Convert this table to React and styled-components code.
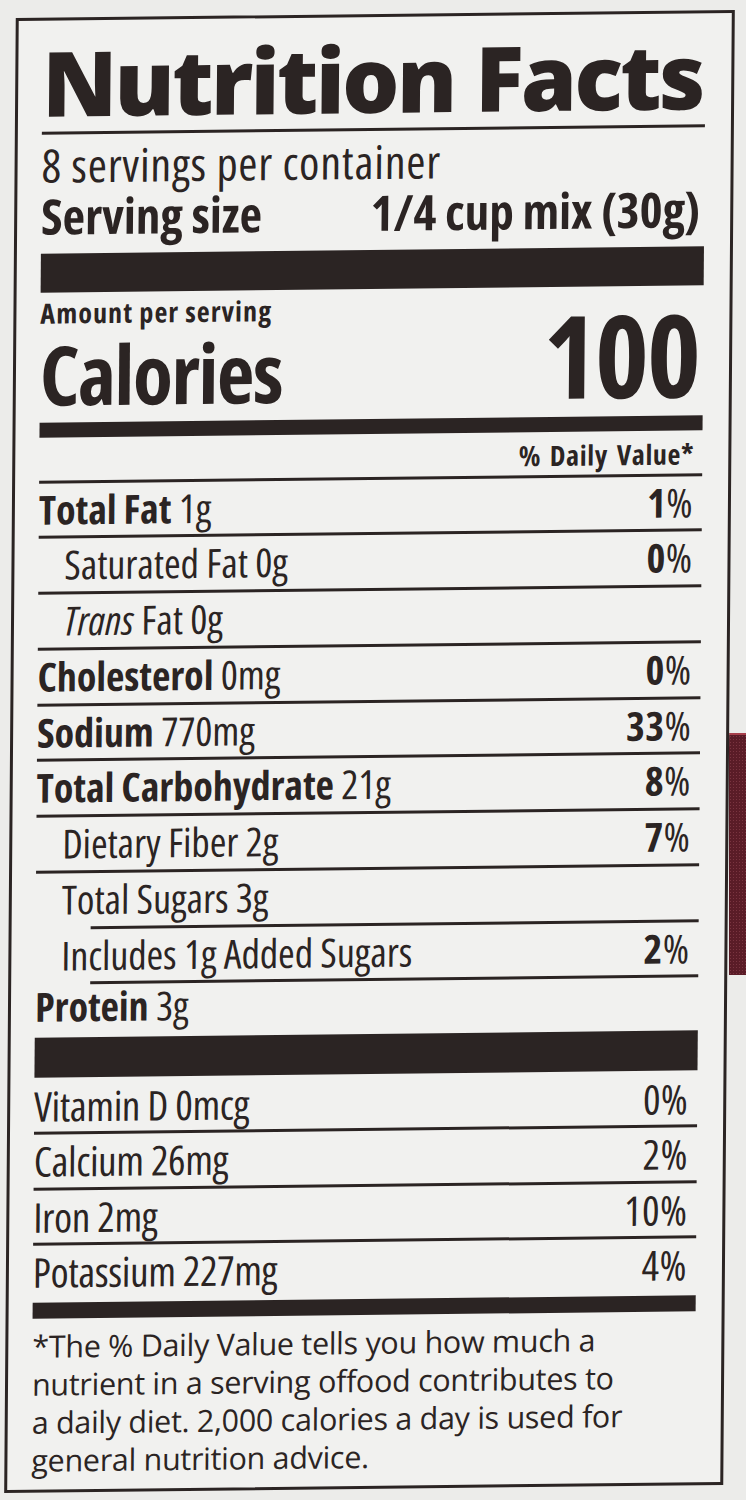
import styled, { createGlobalStyle } from 'styled-components';

const ink = '#2b2423';

const GlobalStyle = createGlobalStyle`
  body {
    margin: 0;
    background: #ececea;
    color: ${ink};
    font-family: "Open Sans", "Liberation Sans", sans-serif;
  }
`;

const Page = styled.div`
  display: flex;
  align-items: flex-start;
  width: 746px;
  height: 1500px;
  overflow: hidden;
`;

// the photo is shot a little out of square, hence the small skew
const Label = styled.section`
  box-sizing: border-box;
  flex: none;
  display: flex;
  flex-direction: column;
  margin: 14px 0 0 10px;
  width: 719px;
  height: 1475px;
  padding: 16px 26px 0 24px;
  border: 3px solid ${ink};
  background: #f1f1ef;
  transform: skewX(-0.45deg) skewY(-0.65deg);
`;

const Side = styled.div`
  flex: none;
  width: 17px;
`;

const Wrapper = styled.div`
  margin-top: 733px;
  height: 240px;
  border-top: 2px solid #a8404c;
  background-color: #5a1c27;
  background-image: radial-gradient(#7a3440 0.8px, transparent 1px);
  background-size: 3px 3px;
`;

const Title = styled.h1`
  margin: 0;
  font-size: 90px;
  line-height: 91px;
  font-weight: 800;
  font-stretch: 100%;
  letter-spacing: -2.7px;
  white-space: nowrap;
`;

const Rule = styled.div`
  height: ${(p) => p.$h || 3}px;
  margin-top: ${(p) => p.$top || 0}px;
  background: ${ink};
`;

const Line = styled.div`
  display: flex;
  justify-content: space-between;
  align-items: baseline;
  margin-top: ${(p) => p.$top || 0}px;
  font-size: ${(p) => p.$size}px;
  line-height: ${(p) => p.$lh || p.$size}px;
  font-weight: ${(p) => (p.$bold ? 700 : 400)};
  font-stretch: 75%;
  letter-spacing: ${(p) => p.$ls || 0}px;
  white-space: nowrap;
  padding-right: ${(p) => p.$pr || 0}px;
`;

const CalBlock = styled.div`
  display: flex;
  justify-content: space-between;
  align-items: flex-end;
  margin-top: 7px;
  padding-right: 4px;
`;

const CalLeft = styled.div`
  display: flex;
  flex-direction: column;
`;

const Amount = styled.div`
  font-size: 28px;
  line-height: 27px;
  font-weight: 700;
  font-stretch: 75%;
  letter-spacing: 1.1px;
`;

const Calories = styled.div`
  margin-top: 5px;
  font-size: 82px;
  line-height: 84px;
  font-weight: 700;
  font-stretch: 75%;
  letter-spacing: -1.5px;
`;

const Big = styled.div`
  font-size: 115px;
  line-height: 110px;
  font-weight: 700;
  font-stretch: 75%;
  letter-spacing: -2px;
`;

const DailyHead = styled.div`
  margin-top: 10.5px;
  padding-right: 8px;
  text-align: right;
  font-size: 28px;
  line-height: 27px;
  font-weight: 700;
  font-stretch: 75%;
  letter-spacing: 0.7px;
  word-spacing: 3px;
`;

const Row = styled.div`
  display: flex;
  justify-content: space-between;
  padding-left: ${(p) => (p.$sub ? 26 : 0)}px;
  padding-right: 9px;
  font-size: ${(p) => p.$size || 40}px;
  line-height: ${(p) => p.$lh || 52.75}px;
  font-stretch: 75%;
  letter-spacing: ${(p) => p.$ls || 0}px;
  white-space: nowrap;
  padding-bottom: ${(p) => (p.$rule === false ? 0 : 3)}px;
  background: ${(p) =>
    p.$rule === false
      ? 'none'
      : `linear-gradient(${ink}, ${ink}) no-repeat right bottom / calc(100% - ${p.$inset || 0}px) 3px`};
`;

const Name = styled.span`
  font-weight: 700;
`;

const Ital = styled.i`
  font-style: italic;
`;

const Pct = styled.span`
  font-weight: ${(p) => (p.$bold ? 700 : 400)};
  letter-spacing: 0.5px;
`;

const Sign = styled.span`
  font-weight: 400;
`;

const Vitamins = styled.div`
  padding-top: 2px;
`;

const Footnote = styled.p`
  margin: 8px 0 0;
  font-size: 30.5px;
  line-height: 38px;
  font-stretch: 100%;
  letter-spacing: -0.3px;
  white-space: nowrap;
`;

const nutrients = [
  { name: 'Total Fat', amount: '1g', pct: '1' },
  { sub: true, label: 'Saturated Fat 0g', pct: '0' },
  { sub: true, trans: true },
  { name: 'Cholesterol', amount: '0mg', pct: '0' },
  { name: 'Sodium', amount: '770mg', pct: '33' },
  { name: 'Total Carbohydrate', amount: '21g', pct: '8' },
  { sub: true, label: 'Dietary Fiber 2g', pct: '7' },
  { sub: true, label: 'Total Sugars 3g', inset: 55 },
  { sub: true, label: 'Includes 1g Added Sugars', pct: '2', inset: 55 },
];

const vitamins = [
  ['Vitamin D 0mcg', '0%'],
  ['Calcium 26mg', '2%'],
  ['Iron 2mg', '10%'],
  ['Potassium 227mg', '4%'],
];

function App() {
  return (
    <Page>
      <GlobalStyle />
      <Label>
        <Title>Nutrition Facts</Title>
        <Rule $top={4} />
        <Line $top={7.5} $size={46} $lh={45} $ls={0.9}>8 servings per container</Line>
        <Line $top={4.5} $size={49} $bold $pr={4}>
          <span>Serving size</span>
          <span>1/4 cup mix (30g)</span>
        </Line>
        <Rule $top={12.5} $h={39} />
        <CalBlock>
          <CalLeft>
            <Amount>Amount per serving</Amount>
            <Calories>Calories</Calories>
          </CalLeft>
          <Big>100</Big>
        </CalBlock>
        <Rule $top={7} $h={15} />
        <DailyHead>% Daily Value*</DailyHead>
        <Rule $top={5.5} />

        {nutrients.map((n, i) => (
          <Row key={i} $sub={n.sub} $inset={n.inset}>
            {n.trans ? (
              <span><Ital>Trans</Ital> Fat 0g</span>
            ) : n.sub ? (
              <span>{n.label}</span>
            ) : (
              <span><Name>{n.name}</Name> {n.amount}</span>
            )}
            {n.pct && (
              <Pct $bold>{n.pct}<Sign>%</Sign></Pct>
            )}
          </Row>
        ))}
        <Row $rule={false} $lh={44}>
          <span><Name>Protein</Name> 3g</span>
        </Row>
        <Rule $top={8.25} $h={40} />

        <Vitamins>
          {vitamins.map(([label, pct], i) => (
            <Row key={label} $size={41} $lh={52.5} $ls={-0.3} $rule={i < vitamins.length - 1}>
              <span>{label}</span>
              <Pct>{pct}</Pct>
            </Row>
          ))}
        </Vitamins>
        <Rule $top={4} $h={16} />

        <Footnote>
          *The % Daily Value tells you how much a<br />
          nutrient in a serving offood contributes to<br />
          a daily diet. 2,000 calories a day is used for<br />
          general nutrition advice.
        </Footnote>
      </Label>
      <Side>
        <Wrapper />
      </Side>
    </Page>
  );
}

export default App;
